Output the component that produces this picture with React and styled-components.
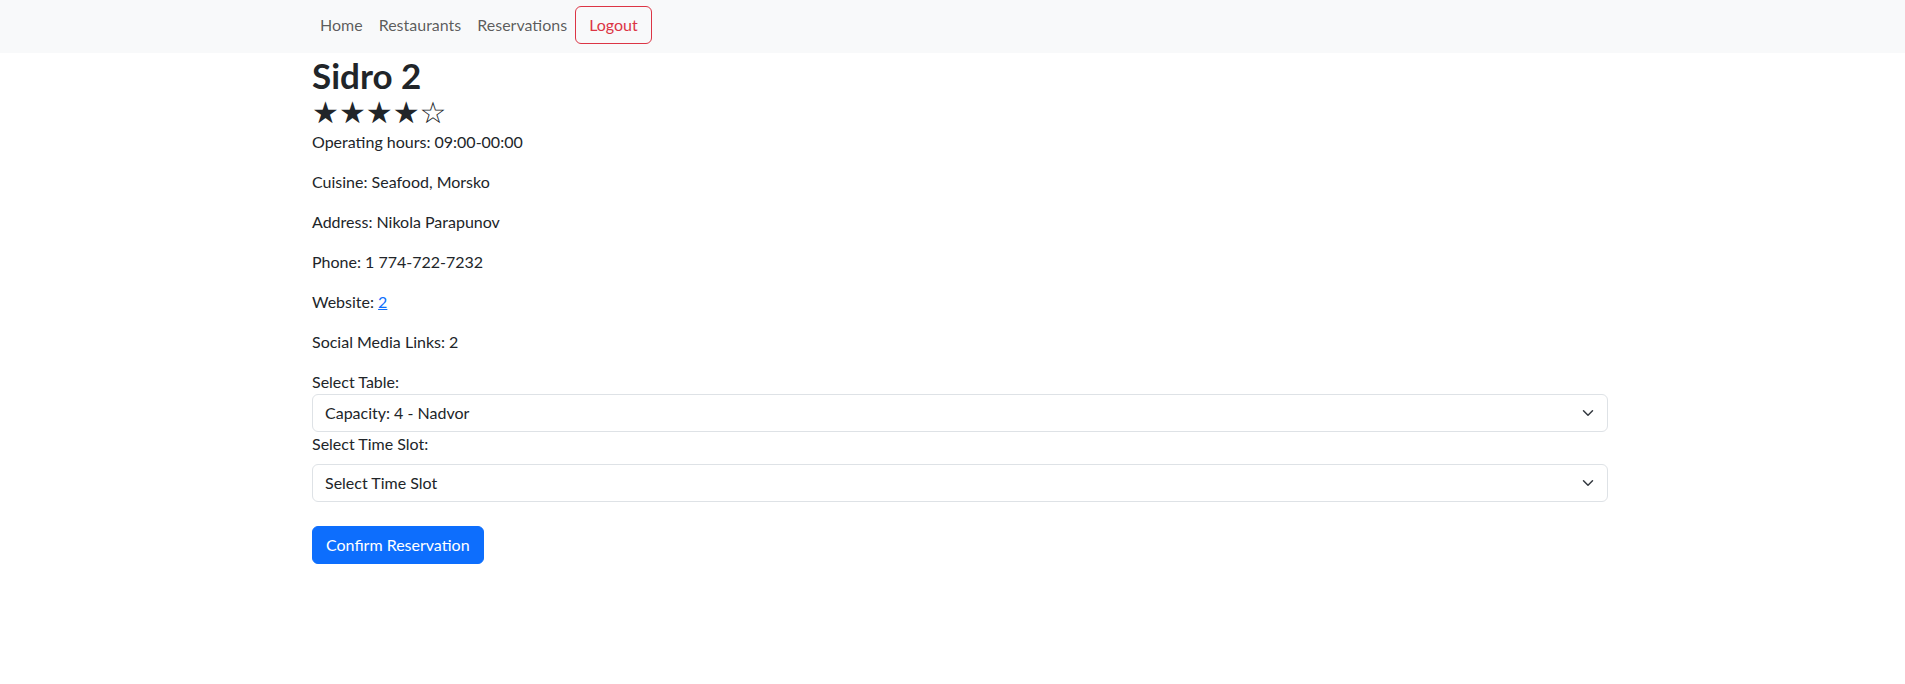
import React from "react";
import styled, { createGlobalStyle } from "styled-components";

const GlobalStyle = createGlobalStyle`
  html, body { margin: 0; padding: 0; background: #fff; }
  body {
    font-family: Lato, "Open Sans", "Noto Sans", sans-serif;
    font-size: 16px;
    line-height: 1.5;
    color: #212529;
  }
  * { box-sizing: border-box; }
`;

const Navbar = styled.nav`
  background: #f8f9fa;
  height: 53px;
  padding: 6px 0 0 312px;
`;

const NavList = styled.ul`
  display: flex;
  align-items: center;
  height: 38px;
  margin: 0;
  padding: 0;
  list-style: none;
`;

const NavLink = styled.a`
  display: block;
  padding: 8px;
  color: rgba(0, 0, 0, 0.65);
  text-decoration: none;
  line-height: 24px;
`;

const LogoutButton = styled.button`
  font: inherit;
  line-height: 24px;
  padding: 6px 13px;
  color: #dc3545;
  background: transparent;
  border: 1px solid #dc3545;
  border-radius: 6px;
  cursor: pointer;
`;

const Container = styled.main`
  width: 1296px;
  margin-left: 312px;
`;

const Title = styled.h2`
  font-size: 35px;
  font-weight: 700;
  line-height: 1.27;
  margin: 0 0 3px;
`;

const Stars = styled.div`
  font-family: "DejaVu Sans", sans-serif;
  font-size: 30px;
  line-height: 25px;
  height: 25px;
  margin-bottom: 5px;
  color: #212529;
  white-space: nowrap;
`;

const Para = styled.p`
  margin: 0 0 16px;
`;

const Link = styled.a`
  color: #0d6efd;
  text-decoration: underline;
`;

const Label = styled.label`
  display: block;
  margin-bottom: ${(p) => (p.$spaced ? "8px" : "0")};
`;

const SelectWrap = styled.div`
  position: relative;
`;

const Select = styled.select`
  display: block;
  width: 100%;
  height: 38px;
  padding: 6px 36px 6px 12px;
  font: inherit;
  line-height: 24px;
  color: #212529;
  background: #fff;
  border: 1px solid #dee2e6;
  border-radius: 6px;
  appearance: none;
  -webkit-appearance: none;
`;

const Chevron = styled.svg`
  position: absolute;
  right: 12px;
  top: 13px;
  width: 16px;
  height: 12px;
  pointer-events: none;
`;

const PrimaryButton = styled.button`
  margin-top: 24px;
  font: inherit;
  line-height: 24px;
  padding: 6px 13px;
  color: #fff;
  background: #0d6efd;
  border: 1px solid #0d6efd;
  border-radius: 6px;
  cursor: pointer;
`;

function SelectField({ label, spaced, options }) {
  return (
    <>
      <Label $spaced={spaced}>{label}</Label>
      <SelectWrap>
        <Select defaultValue={options[0]}>
          {options.map((o) => (
            <option key={o}>{o}</option>
          ))}
        </Select>
        <Chevron viewBox="0 0 16 16" preserveAspectRatio="xMidYMid meet">
          <path
            d="m2 5 6 6 6-6"
            fill="none"
            stroke="#343a40"
            strokeWidth="2"
            strokeLinecap="round"
            strokeLinejoin="round"
          />
        </Chevron>
      </SelectWrap>
    </>
  );
}

export default function App() {
  return (
    <>
      <GlobalStyle />
      <Navbar>
        <NavList>
          <li><NavLink href="#">Home</NavLink></li>
          <li><NavLink href="#">Restaurants</NavLink></li>
          <li><NavLink href="#">Reservations</NavLink></li>
          <li><LogoutButton>Logout</LogoutButton></li>
        </NavList>
      </Navbar>
      <Container>
        <Title>Sidro 2</Title>
        <Stars>★★★★☆</Stars>
        <Para>Operating hours: 09:00-00:00</Para>
        <Para>Cuisine: Seafood, Morsko</Para>
        <Para>Address: Nikola Parapunov</Para>
        <Para>Phone: 1 774-722-7232</Para>
        <Para>
          Website: <Link href="#">2</Link>
        </Para>
        <Para>Social Media Links: 2</Para>
        <SelectField label="Select Table:" options={["Capacity: 4 - Nadvor"]} />
        <SelectField label="Select Time Slot:" spaced options={["Select Time Slot"]} />
        <PrimaryButton>Confirm Reservation</PrimaryButton>
      </Container>
    </>
  );
}
